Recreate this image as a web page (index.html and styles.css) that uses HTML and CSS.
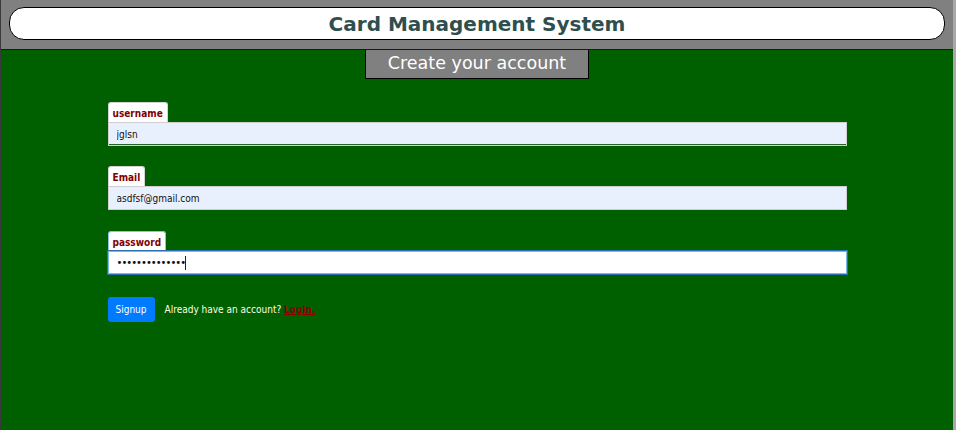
FILE: index.html
```html
<!DOCTYPE html>
<html>
<head>
<meta charset="utf-8">
<title>Card Management System</title>
<link rel="stylesheet" href="styles.css">
</head>
<body>
<div class="page">
  <header class="topbar">
    <h1 class="title">Card Management System</h1>
  </header>
  <div class="tab-wrap">
    <div class="tab">Create your account</div>
  </div>
  <form class="form">
    <div class="field">
      <label class="label">username</label>
      <input class="input filled first" type="text" value="jglsn">
    </div>
    <div class="field">
      <label class="label">Email</label>
      <input class="input filled" type="text" value="asdfsf@gmail.com">
    </div>
    <div class="field field-pw">
      <label class="label focus-label">password</label>
      <div class="pw-box">
        <input class="input focused" type="password" value="abcdefghijklmn">
        <span class="caret"></span>
      </div>
    </div>
    <div class="actions">
      <button class="btn" type="button">Signup</button>
      <span class="note">Already have an account? <a class="login" href="#">Login.</a></span>
    </div>
  </form>
</div>
</body>
</html>
```
FILE: styles.css
```css
html, body {
  margin: 0;
  padding: 0;
  height: 100%;
}
body {
  background: #a8a8a8;
  font-family: "DejaVu Sans Condensed", "DejaVu Sans", sans-serif;
}
.page {
  width: 953px;
  min-height: 430px;
  background: #006000;
  border-left: 1px solid #3a3a3a;
  box-sizing: border-box;
}
.topbar {
  background: #808080;
  padding: 7px 8px 9px 8px;
  border-bottom: 1px solid #1a1a1a;
}
.title {
  margin: 0;
  height: 31px;
  background: #fff;
  border: 1px solid #000;
  border-radius: 15px;
  color: #2f4f4f;
  font-family: "DejaVu Sans", sans-serif;
  font-size: 20px;
  font-weight: bold;
  text-align: center;
  line-height: 32px;
}
.tab-wrap {
  display: flex;
  justify-content: center;
}
.tab {
  width: 222px;
  height: 28px;
  background: #808080;
  border: 1px solid #000;
  border-top: none;
  color: #fff;
  font-family: "DejaVu Sans", sans-serif;
  font-size: 17.5px;
  line-height: 27px;
  text-align: center;
}
.form {
  width: 739px;
  margin: 23px auto 0;
  display: flex;
  flex-direction: column;
  gap: 20px;
}
.field {
  display: flex;
  flex-direction: column;
  align-items: flex-start;
}
.field-pw {
  margin-top: 1px;
}
.label {
  height: 19px;
  padding: 0 4px;
  background: #fff;
  border: 1px solid #d4d4d4;
  border-bottom: none;
  border-radius: 3px 3px 0 0;
  color: #800000;
  font-size: 10px;
  font-weight: bold;
  line-height: 22px;
}
.focus-label {
  border-color: #8ec0e8;
}
.input {
  width: 100%;
  height: 24px;
  box-sizing: border-box;
  margin: 0;
  padding: 0 8px;
  border: 1px solid #cfcfcf;
  background: #e8f0fe;
  font-family: "DejaVu Sans Condensed", "DejaVu Sans", sans-serif;
  font-size: 10px;
  color: #111;
  outline: none;
}
.first {
  box-shadow: inset 0 -1px 0 #2e5e2e;
}
.pw-box {
  position: relative;
  width: 100%;
}
.focused {
  display: block;
  height: 23px;
  background: #fff;
  border: 1px solid #7ab6e6;
  box-shadow: 0 0 0 1px #2a6fb0;
  font-family: "DejaVu Sans", sans-serif;
  letter-spacing: -1px;
}
.caret {
  position: absolute;
  left: 77px;
  top: 5px;
  width: 1px;
  height: 14px;
  background: #222;
}
.actions {
  display: flex;
  align-items: center;
  gap: 10px;
  margin-top: 3px;
}
.btn {
  width: 47px;
  height: 25px;
  background: #007bff;
  border: none;
  border-radius: 3px;
  color: #fff;
  font-family: "DejaVu Sans Condensed", "DejaVu Sans", sans-serif;
  font-size: 10px;
  padding: 0;
}
.note {
  color: #fffde0;
  font-size: 10px;
}
.login {
  color: #8b0000;
  font-weight: bold;
}
```
